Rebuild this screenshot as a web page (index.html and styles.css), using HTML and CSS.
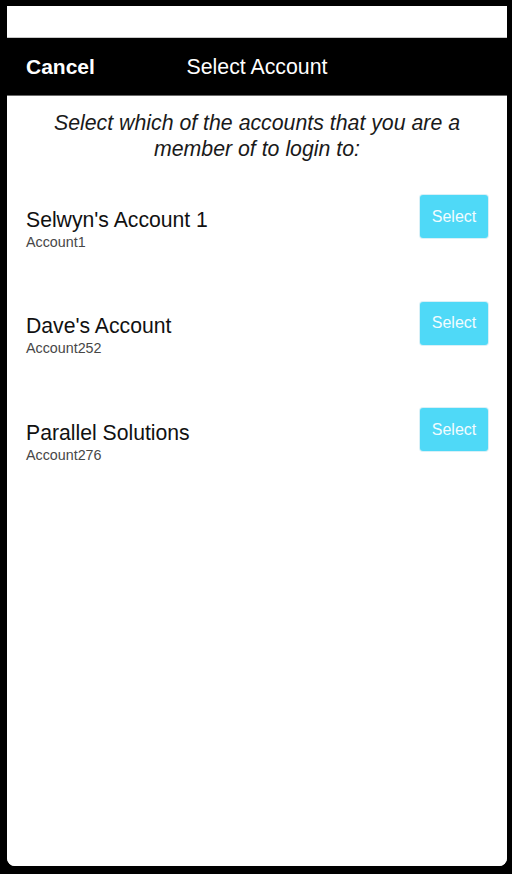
FILE: index.html
```html
<!DOCTYPE html>
<html lang="en">
<head>
<meta charset="utf-8">
<title>Select Account</title>
<link rel="stylesheet" href="styles.css">
</head>
<body>
<div class="screen">
  <div class="status-strip"></div>
  <header class="nav">
    <span class="nav-cancel">Cancel</span>
    <span class="nav-title">Select Account</span>
    <span class="nav-spacer"></span>
  </header>
  <main class="content">
    <p class="intro">Select which of the accounts that you are a member of to login to:</p>
    <ul class="accounts">
      <li class="account">
        <div class="account-info">
          <div class="account-name">Selwyn's Account 1</div>
          <div class="account-id">Account1</div>
        </div>
        <button class="select-btn" type="button">Select</button>
      </li>
      <li class="account">
        <div class="account-info">
          <div class="account-name">Dave's Account</div>
          <div class="account-id">Account252</div>
        </div>
        <button class="select-btn" type="button">Select</button>
      </li>
      <li class="account">
        <div class="account-info">
          <div class="account-name">Parallel Solutions</div>
          <div class="account-id">Account276</div>
        </div>
        <button class="select-btn" type="button">Select</button>
      </li>
    </ul>
  </main>
</div>
</body>
</html>
```

FILE: styles.css
```css
html, body {
  margin: 0;
  padding: 0;
  background: #000;
  height: 100%;
}

body {
  font-family: "Liberation Sans", Arial, Helvetica, sans-serif;
  overflow: hidden;
}

.screen {
  margin: 6px 5px 0 7px;
  width: 500px;
  height: 860px;
  display: flex;
  flex-direction: column;
  background: #fff;
  border-radius: 0 0 8px 8px;
  overflow: hidden;
}

.status-strip {
  height: 31px;
  background: #fff;
  border-bottom: 1px solid #c8c8c8;
}

.nav {
  background: #000;
  border-bottom: 1px solid #6a6a6a;
  display: grid;
  grid-template-columns: 1fr auto 1fr;
  align-items: center;
  padding-top: 1px;
  box-sizing: border-box;
  height: 58px;
  color: #fff;
  font-size: 21.3px;
}

.nav-cancel {
  font-weight: bold;
  font-size: 21px;
  padding-left: 19px;
  justify-self: start;
}

.nav-title {
  font-weight: normal;
}

.content {
  flex: 1;
  background: #fff;
  padding-top: 14px;
}

.intro {
  margin: 0;
  padding: 0 28px 23px;
  text-align: center;
  font-style: italic;
  font-size: 21.3px;
  line-height: 26px;
  color: #1a1a1a;
}

.accounts {
  list-style: none;
  margin: 0;
  padding: 0;
}

.account {
  display: flex;
  justify-content: space-between;
  align-items: flex-start;
  padding: 10px 19px 40px;
}

.account-info {
  margin-top: 12.7px;
}

.account-name {
  font-size: 21.2px;
  line-height: 24px;
  color: #111;
}

.account-id {
  font-size: 14.3px;
  line-height: 20px;
  color: #474747;
}

.select-btn {
  width: 68px;
  height: 43px;
  margin: 0;
  padding: 0;
  border: none;
  border-radius: 3px;
  background: #4fd9f7;
  box-shadow: 0 0 0 1px rgba(40, 170, 210, 0.18);
  color: #f2fcff;
  font-family: "Liberation Sans", Arial, Helvetica, sans-serif;
  font-size: 16px;
  display: flex;
  align-items: center;
  justify-content: center;
}
```
